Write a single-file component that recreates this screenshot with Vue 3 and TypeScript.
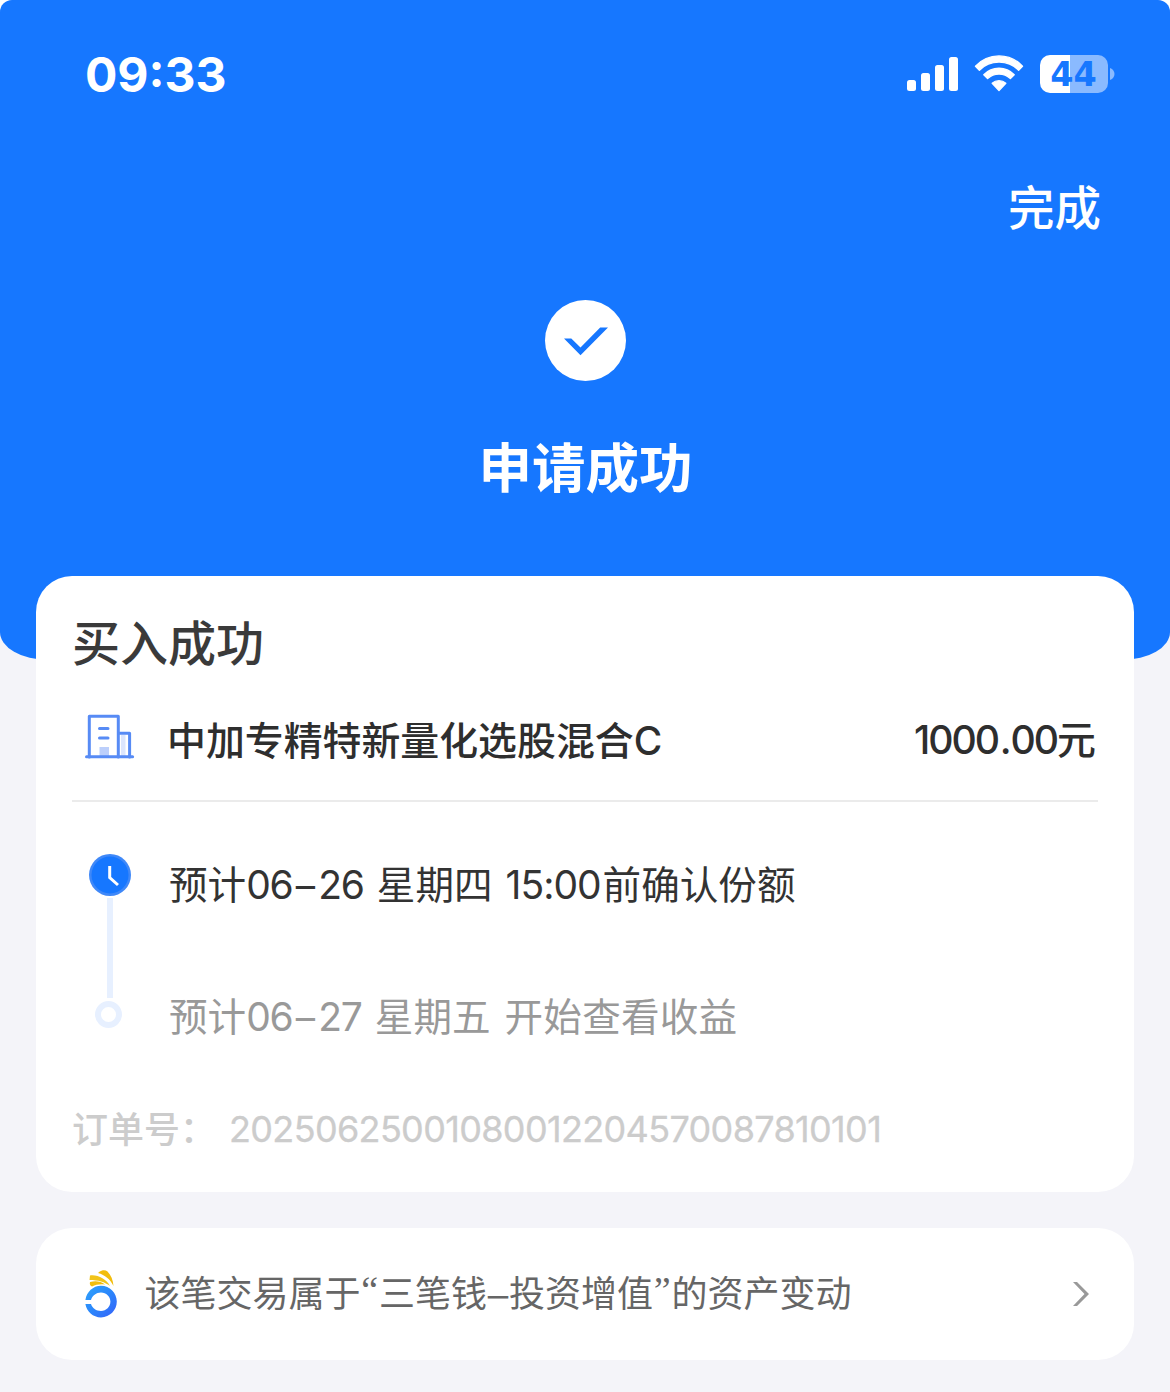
<script setup lang="ts">
interface Run {
  t: string
  cls: string
}
interface Step {
  state: 'active' | 'pending'
  runs: Run[]
}

const bars: number[] = [11, 18, 26, 34]

const steps: Step[] = [
  {
    state: 'active',
    runs: [
      { t: '预计', cls: 'zh' },
      { t: '06', cls: 'num' },
      { t: '–', cls: 'en' },
      { t: '26', cls: 'num day' },
      { t: '星期四', cls: 'zh' },
      { t: '15:00', cls: 'num hour' },
      { t: '前确认份额', cls: 'zh' },
    ],
  },
  {
    state: 'pending',
    runs: [
      { t: '预计', cls: 'zh' },
      { t: '06', cls: 'num' },
      { t: '–', cls: 'en' },
      { t: '27', cls: 'num day' },
      { t: '星期五', cls: 'zh' },
      { t: '开始查看收益', cls: 'zh gap' },
    ],
  },
]
</script>

<template>
  <main class="page">
    <header class="hero">
      <div class="status">
        <span class="time">09:33</span>
        <div class="signals">
          <div class="bars">
            <i v-for="h in bars" :key="h" :style="{ height: h + 'px' }"></i>
          </div>
          <svg class="wifi" width="50" height="38" viewBox="0 0 50 38">
            <g stroke="#fff" stroke-width="1.4" stroke-linejoin="round">
              <path d="M1.5 11.3 C14 -2.6 36 -2.6 48.5 11.3 L44.6 15.2 C34 4.4 16 4.4 5.4 15.2 Z" />
              <path d="M9.8 19.8 C18 11 32 11 40.2 19.8 L36.4 23.6 C30 17.6 20 17.6 13.6 23.6 Z" />
              <path d="M18.2 28.2 C22 24.8 28 24.8 31.8 28.2 L25 35.6 Z" />
            </g>
          </svg>
          <div class="battery">
            <span class="cell"><span class="level">44</span></span>
            <svg width="5" height="12" viewBox="0 0 5 12"><path d="M0 0 C6 2 6 10 0 12 Z" fill="#8abaff" /></svg>
          </div>
        </div>
      </div>
      <div class="nav"><span class="done">完成</span></div>
      <svg class="check" width="82" height="82" viewBox="0 0 82 82">
        <circle cx="41.5" cy="40.5" r="40.5" fill="#fff" />
        <path d="M20 38.5 H27.3 L36.5 47.4 L56.2 27.4 H64 L36.5 55.2 Z" fill="#1677ff" />
      </svg>
      <h1>申请成功</h1>
    </header>

    <section class="card order">
      <h2>买入成功</h2>
      <div class="fund">
        <svg class="building" width="50" height="46" viewBox="0 0 50 46">
          <rect x="14.5" y="33" width="9.5" height="11" fill="#bccffb" />
          <rect x="36" y="21" width="4.5" height="22" fill="#dce6fd" />
          <g fill="none" stroke="#578bf5" stroke-width="3" stroke-linecap="round" stroke-linejoin="round">
            <path d="M4.3 43 V2.3 H33.3 V43" />
            <path d="M34 19.3 H44.6 V43" />
            <path d="M1.5 42.8 H47.6" />
            <path d="M14.5 14.6 H23 M14.5 23.9 H23" />
          </g>
        </svg>
        <span class="name">中加专精特新量化选股混合<span class="latin">C</span></span>
        <span class="amount"><span class="digits">1000<span class="point">.</span>00</span>元</span>
      </div>
      <div class="timeline">
        <div class="rail">
          <svg width="42" height="42" viewBox="0 0 42 42">
            <circle cx="21" cy="21" r="21" fill="#3f88f8" />
            <circle cx="21" cy="21" r="18.5" fill="#1677ff" />
            <path d="M20.7 12 V23.6 L29 31" fill="none" stroke="#fff" stroke-width="3" />
          </svg>
          <i class="line"></i>
          <i class="dot"></i>
        </div>
        <div class="steps">
          <p v-for="s in steps" :key="s.state" :class="s.state">
            <span v-for="r in s.runs" :key="r.t" :class="r.cls">{{ r.t }}</span>
          </p>
        </div>
      </div>
      <div class="serial"><span class="label">订单号：</span><span class="no">20250625001080012204570087810101</span></div>
    </section>

    <section class="card link">
      <svg class="logo" width="34" height="50" viewBox="0 0 34 50">
        <defs>
          <linearGradient id="ring" x1="0" y1="0" x2="1" y2="1">
            <stop offset="0" stop-color="#2ea3fb" />
            <stop offset="0.5" stop-color="#2b86fb" />
            <stop offset="1" stop-color="#3661f8" />
          </linearGradient>
        </defs>
        <path d="M13 4 C16 1 20 .5 22.5 2.5 C26 6 28 11 28.5 17 C25 10 20 6 13 4 Z" fill="#f2bd0c" />
        <path d="M5 6.5 C13 5.5 21 10 25 17 C20 13 13 11 4.5 11 Z" fill="#f2c419" />
        <path d="M5 13 C11 11.5 16 12.5 20 15.5 C15 15 11 15.5 7 17.5 C5 17 4.5 15 5 13 Z" fill="#f2bd0c" />
        <path
          d="M.4 31 C1.6 23 8 16.8 16 16.8 C24.8 16.8 31.8 24 31.8 32.6 C31.8 41.4 24.8 48.4 16 48.4 C8 48.4 1.6 42.5 .4 35 H6 C7.2 39.2 11.2 42 16 42 C21.2 42 25.4 37.8 25.4 32.6 C25.4 27.4 21.2 23.4 16 23.4 C11.2 23.4 7.2 26.6 6 31 Z"
          fill="url(#ring)"
        />
      </svg>
      <p class="note">
        <span>该笔交易属于</span><span class="q">“</span><span>三笔钱</span><span class="dash">–</span><span>投资增值</span><span class="q">”</span><span>的资产变动</span>
      </p>
      <svg class="arrow" width="18" height="26" viewBox="0 0 18 26">
        <path d="M1 1 H5 L17 13 L5 25 H1 L12.5 13 Z" fill="#999" />
      </svg>
    </section>
  </main>
</template>

<style>
body {
  background: #fff;
}
</style>

<style scoped>
.page {
  width: 1170px;
  height: 1392px;
  overflow: hidden;
  box-sizing: border-box;
  border-radius: 12px 12px 0 0;
  background: #f4f4f9;
  font-family: Inter, 'Noto Sans CJK SC', sans-serif;
  display: flex;
  flex-direction: column;
}
h1,
h2,
p {
  margin: 0;
  white-space: nowrap;
}
i {
  display: block;
}
.hero {
  height: 660px;
  flex: none;
  background: #1677ff;
  border-radius: 0 0 48px 48px / 0 0 28px 28px;
  color: #fff;
  display: flex;
  flex-direction: column;
  align-items: center;
}
.status {
  width: 100%;
  height: 150px;
  box-sizing: border-box;
  padding: 0 55px 0 85px;
  display: flex;
  justify-content: space-between;
  align-items: center;
}
.time {
  font-size: 48px;
  font-weight: 700;
  line-height: 60px;
}
.signals {
  display: flex;
  align-items: center;
  margin-bottom: 2px;
}
.bars {
  display: flex;
  align-items: flex-end;
  gap: 5px;
  height: 34px;
}
.bars i {
  width: 9px;
  border-radius: 2.5px;
  background: #fff;
}
.wifi {
  margin: 0 16px;
  fill: #fff;
}
.battery {
  display: flex;
  align-items: center;
  gap: 2px;
}
.cell {
  width: 68px;
  height: 38px;
  border-radius: 10px;
  background: linear-gradient(90deg, #fff 30px, #8abaff 30px);
  display: flex;
  align-items: center;
  justify-content: center;
}
.level {
  color: #1677ff;
  font-family: 'DejaVu Sans', sans-serif;
  font-size: 33.5px;
  font-weight: 700;
  line-height: 38px;
  margin-right: 1px;
  padding-top: 2px;
}
.nav {
  width: 100%;
  box-sizing: border-box;
  height: 150px;
  padding: 23px 69px 0 0;
  display: flex;
  justify-content: flex-end;
}
.done {
  font-size: 46.5px;
  font-weight: 500;
  line-height: 70px;
}
.check {
  display: block;
}
h1 {
  margin-top: 47px;
  margin-left: 1px;
  font-size: 53.5px;
  font-weight: 700;
  line-height: 80px;
}
.card {
  margin: 0 36px;
  background: #fff;
  border-radius: 36px;
  box-sizing: border-box;
  flex: none;
}
.order {
  margin-top: -84px;
  height: 616px;
  padding: 0 36px;
  display: flex;
  flex-direction: column;
}
h2 {
  margin-top: 32px;
  font-size: 48px;
  font-weight: 500;
  line-height: 72px;
  color: #3a3a3a;
}
.fund {
  height: 122px;
  flex: none;
  box-sizing: border-box;
  border-bottom: 2px solid #ebebeb;
  padding: 0 2px 4px 13px;
  display: flex;
  align-items: center;
  color: #2e2e2e;
  font-weight: 500;
  font-size: 38.9px;
}
.building {
  margin-right: 32px;
  margin-top: -3px;
}
.amount {
  margin-left: auto;
  margin-top: -2px;
}
.digits {
  font-size: 39.2px;
  letter-spacing: -2px;
}
.point {
  margin: 0 1px 0 1.5px;
}
.timeline {
  display: flex;
  height: 299px;
}
.rail {
  width: 42px;
  margin-left: 16.5px;
  padding-top: 52px;
  display: flex;
  flex-direction: column;
  align-items: center;
}
.line {
  width: 6px;
  height: 100px;
  margin-top: 2px;
  background: #e7f0ff;
}
.dot {
  box-sizing: border-box;
  width: 27px;
  height: 27px;
  margin-top: 3px;
  margin-right: 3px;
  border: 6px solid #e7f0ff;
  border-radius: 50%;
}
.steps {
  margin-left: 38.5px;
  padding-top: 53px;
}
.steps p {
  display: flex;
  font-size: 38.6px;
  line-height: 60px;
  height: 132px;
  color: #333;
}
.steps .pending {
  color: #999;
}
.num {
  font-size: 39px;
  letter-spacing: -1.3px;
  font-feature-settings: 'calt' 0;
}
.en {
  width: 26px;
  text-align: center;
}
.day {
  width: 58.5px;
}
.pending .day {
  width: 56.5px;
}
.gap {
  margin-left: 14px;
  letter-spacing: 0.2px;
}
.hour {
  box-sizing: border-box;
  width: 110px;
  padding-left: 13px;
  letter-spacing: -1px;
}
.serial {
  display: flex;
  font-size: 36px;
  line-height: 56px;
  color: #ccc;
  font-weight: 500;
}
.label {
  padding-top: 1px;
}
.no {
  margin-left: 13px;
  font-weight: 400;
  letter-spacing: -0.66px;
  -webkit-text-stroke: 0.3px #ccc;
}
.link {
  margin-top: 36px;
  height: 132px;
  padding: 0 44px 0 49px;
  display: flex;
  align-items: center;
}
.note {
  display: flex;
  margin-left: 25.5px;
  padding-top: 2px;
  font-size: 36px;
  line-height: 54px;
  color: #666;
}
.q {
  width: 18.5px;
  text-align: center;
  font-family: 'Liberation Serif', serif;
  font-size: 38px;
  line-height: 46px;
}
.dash {
  width: 22px;
  display: flex;
  justify-content: center;
  font-size: 41px;
  font-weight: 300;
  line-height: 56px;
}
.arrow {
  margin-left: auto;
}
</style>
